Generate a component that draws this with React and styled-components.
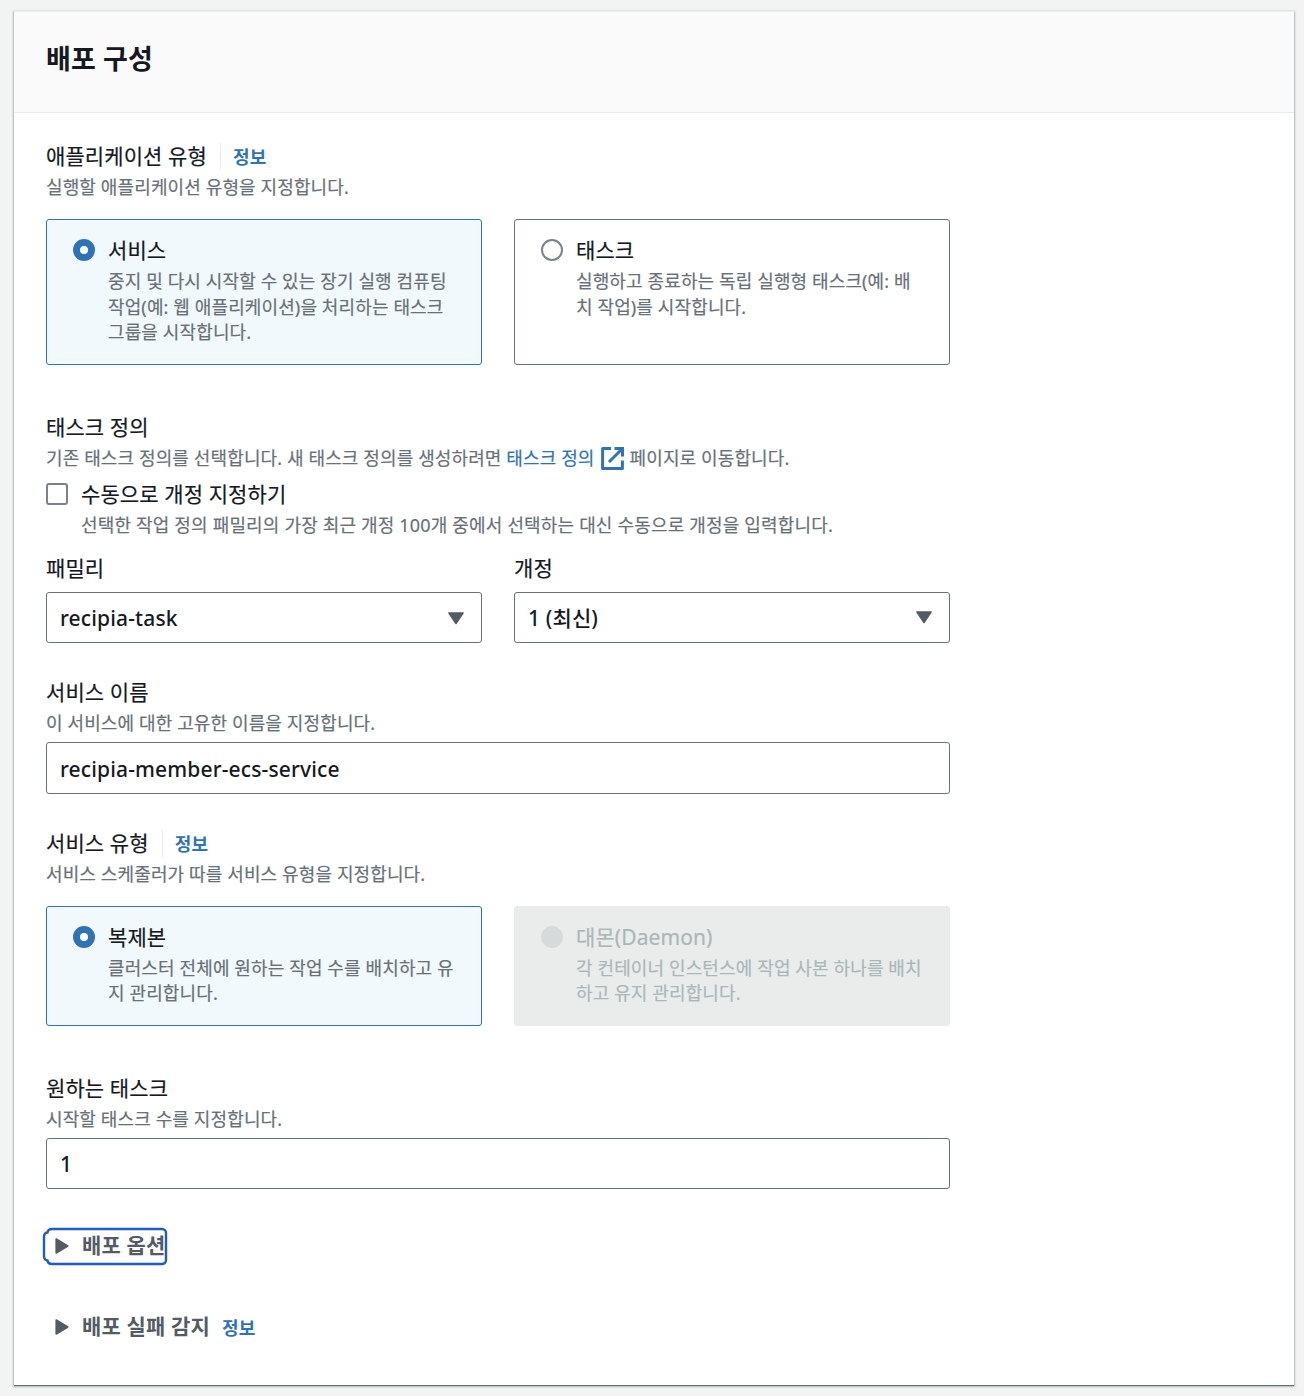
/**
 *
 * Deployment configuration
 *
 */

import React from 'react';

import styled, { createGlobalStyle } from 'styled-components';

const GlobalStyle = createGlobalStyle`
  body {
    margin: 0;
    background: #f2f3f3;
    color: #16191f;
    font-family: 'Noto Sans', 'Noto Sans CJK KR', sans-serif;
  }

  * {
    box-sizing: border-box;
  }
`;

const Page = styled.div`
  height: 1396px;
  padding: 11px 10px 11px 14px;
`;

const Panel = styled.section`
  height: 1374px;
  background: #fff;
  border-top: 1px solid #eaeded;
  box-shadow: 0 1px 1px 0 rgba(0, 28, 36, 0.5), 0 1px 2px 1px rgba(0, 28, 36, 0.2);
`;

const PanelHeader = styled.header`
  height: 101px;
  padding: 26px 32px 0;
  background: #fafafa;
  border-bottom: 1px solid #eaeded;
`;

const Title = styled.h2`
  margin: 0;
  font-size: 27px;
  font-weight: 700;
  letter-spacing: 0.1px;
  line-height: 42px;
`;

const PanelBody = styled.div`
  display: flex;
  flex-direction: column;
  width: 968px;
  padding: 26px 32px 0;
`;

const Field = styled.div`
  margin-bottom: ${({ $gap }) => $gap}px;
`;

const LabelRow = styled.div`
  display: flex;
  align-items: center;
  height: 35px;
  margin-bottom: 1px;
`;

const Label = styled.div`
  font-size: 21px;
  letter-spacing: 0.1px;
  line-height: 35px;
  white-space: nowrap;
  -webkit-text-stroke: 0.2px;
`;

const InfoLink = styled.a`
  color: #2e73b8;
  font-size: 18px;
  font-weight: 700;
  letter-spacing: 0.2px;
  line-height: 26px;
`;

const Divider = styled.span`
  height: 27px;
  margin: 0 12px 0 13px;
  border-left: 1px solid #eaeded;
`;

const Description = styled.div`
  color: #687078;
  font-size: 18px;
  letter-spacing: 0.12px;
  line-height: 25.33px;
  -webkit-text-stroke: 0.2px;
`;

const Columns = styled.div`
  display: grid;
  grid-template-columns: 1fr 1fr;
  gap: 32px;
  margin-top: ${({ $top }) => $top || 0}px;
`;

const tileColors = {
  selected: { border: '#2e73b8', background: '#f2f9fd' },
  idle: { border: '#687078', background: '#fff' },
  disabled: { border: '#eaecec', background: '#eaecec' },
};

const Tile = styled.div`
  display: flex;
  gap: 13px;
  height: ${({ $height }) => $height}px;
  padding: 13px 20px 0 26px;
  background: ${({ $state }) => tileColors[$state].background};
  border: 1px solid ${({ $state }) => tileColors[$state].border};
  border-radius: 3px;

  ${Label}, ${Description} {
    ${({ $state }) => ($state === 'disabled' ? 'color: #aab7b8;' : '')}
  }
`;

const TileText = styled.div`
  ${Label} {
    margin-bottom: 1px;
  }
`;

const radioStyles = {
  selected: 'border: 7px solid #2e73b8; background: #fff;',
  idle: 'border: 2px solid #7a8188; background: #fff;',
  disabled: 'background: #d5dbdb;',
};

const Radio = styled.span`
  flex: none;
  width: 22px;
  height: 22px;
  margin-top: 6px;
  border-radius: 50%;
  ${({ $state }) => radioStyles[$state]}
`;

const TaskLink = styled.a`
  color: #2e73b8;
`;

const ExternalIcon = styled.svg`
  width: 23px;
  height: 23px;
  margin: 0 6px;
  vertical-align: -5px;
`;

const CheckRow = styled.div`
  display: flex;
  gap: 13px;
  margin-top: 5px;

  ${Description} {
    margin: 1px 0 -1px;
    letter-spacing: 0.17px;
  }
`;

const Checkbox = styled.span`
  flex: none;
  width: 22px;
  height: 22px;
  margin-top: 6px;
  border: 2px solid #7a8188;
  border-radius: 3px;
`;

const Control = styled.div`
  display: flex;
  align-items: center;
  justify-content: space-between;
  height: ${({ $height }) => $height || 51}px;
  margin-top: ${({ $top }) => $top}px;
  padding: ${({ $shift }) => ($shift ? '2px' : '0')} 16px 0 13px;
  border: 1px solid #687078;
  border-radius: 3px;
  font-size: 21px;
  font-weight: 500;
  letter-spacing: 0.14px;
  white-space: pre;
`;

const Toggle = styled.div`
  display: flex;
  align-items: center;
  height: 35px;
  margin-bottom: 46px;
  padding-left: 9px;
  color: #545b64;
  font-size: 21px;
  font-weight: 700;
  letter-spacing: 0.15px;
  line-height: 33px;

  svg {
    margin-right: 13px;
  }

  ${InfoLink} {
    margin: 2px 0 0 12px;
  }
`;

const ToggleText = styled.span`
  margin-top: -2px;
`;

const FocusTarget = styled.div`
  position: relative;
  width: max-content;
`;

const FocusRing = styled.svg`
  position: absolute;
  top: -2px;
  left: -4px;
`;

function Caret() {
  return (
    <svg width="18" height="14" viewBox="0 0 18 14">
      <path d="M2 2h14L9 12.500z" fill="#545b64" stroke="#545b64" strokeWidth="1.6" strokeLinejoin="round" />
    </svg>
  );
}

function Arrow() {
  return (
    <svg width="14" height="18" viewBox="0 0 14 18">
      <path d="M1.2 2v14L12.8 9z" fill="#545b64" stroke="#545b64" strokeWidth="1.6" strokeLinejoin="round" />
    </svg>
  );
}

function External() {
  return (
    <ExternalIcon viewBox="0 0 23 23" fill="none" stroke="#2e73b8" strokeWidth="3">
      <path d="M10 1.6H1.6v19.8h19.8V13.5" strokeLinejoin="round" />
      <path d="M13.5 1.6h8v8M21 2L8 15" />
    </ExternalIcon>
  );
}

function Option({ state, height, title, lines }) {
  return (
    <Tile $state={state} $height={height}>
      <Radio $state={state} />
      <TileText>
        <Label>{title}</Label>
        {lines.map((line) => (
          <Description key={line}>{line}</Description>
        ))}
      </TileText>
    </Tile>
  );
}

function Heading({ children, info }) {
  return (
    <LabelRow>
      <Label>{children}</Label>
      {info && (
        <>
          <Divider />
          <InfoLink>정보</InfoLink>
        </>
      )}
    </LabelRow>
  );
}

function App() {
  return (
    <Page>
      <GlobalStyle />
      <Panel>
        <PanelHeader>
          <Title>배포 구성</Title>
        </PanelHeader>
        <PanelBody>
          <Field $gap={45}>
            <Heading info>애플리케이션 유형</Heading>
            <Description>실행할 애플리케이션 유형을 지정합니다.</Description>
            <Columns $top={19}>
              <Option
                state="selected"
                height={146}
                title="서비스"
                lines={[
                  '중지 및 다시 시작할 수 있는 장기 실행 컴퓨팅',
                  '작업(예: 웹 애플리케이션)을 처리하는 태스크',
                  '그룹을 시작합니다.',
                ]}
              />
              <Option
                state="idle"
                height={146}
                title="태스크"
                lines={['실행하고 종료하는 독립 실행형 태스크(예: 배', '치 작업)를 시작합니다.']}
              />
            </Columns>
          </Field>

          <Field $gap={32}>
            <Heading>태스크 정의</Heading>
            <Description>
              기존 태스크 정의를 선택합니다. 새 태스크 정의를 생성하려면 <TaskLink>태스크 정의</TaskLink>
              <External />
              페이지로 이동합니다.
            </Description>
            <CheckRow>
              <Checkbox />
              <div>
                <Label>수동으로 개정 지정하기</Label>
                <Description>
                  선택한 작업 정의 패밀리의 가장 최근 개정 100개 중에서 선택하는 대신 수동으로 개정을 입력합니다.
                </Description>
              </div>
            </CheckRow>
            <Columns $top={14}>
              <div>
                <Label>패밀리</Label>
                <Control $top={6} $shift>
                  recipia-task
                  <Caret />
                </Control>
              </div>
              <div>
                <Label>개정</Label>
                <Control $top={6}>
                  1 (최신)
                  <Caret />
                </Control>
              </div>
            </Columns>
          </Field>

          <Field $gap={32}>
            <Heading>서비스 이름</Heading>
            <Description>이 서비스에 대한 고유한 이름을 지정합니다.</Description>
            <Control $top={6} $height={52} $shift>recipia-member-ecs-service</Control>
          </Field>

          <Field $gap={45}>
            <Heading info>서비스 유형</Heading>
            <Description>서비스 스케줄러가 따를 서비스 유형을 지정합니다.</Description>
            <Columns $top={18}>
              <Option
                state="selected"
                height={120}
                title="복제본"
                lines={['클러스터 전체에 원하는 작업 수를 배치하고 유', '지 관리합니다.']}
              />
              <Option
                state="disabled"
                height={120}
                title="대몬(Daemon)"
                lines={['각 컨테이너 인스턴스에 작업 사본 하나를 배치', '하고 유지 관리합니다.']}
              />
            </Columns>
          </Field>

          <Field $gap={40}>
            <Heading>원하는 태스크</Heading>
            <Description>시작할 태스크 수를 지정합니다.</Description>
            <Control $top={6} $shift>1</Control>
          </Field>

          <FocusTarget>
            <Toggle>
              <Arrow />
              <ToggleText>배포 옵션</ToggleText>
            </Toggle>
            <FocusRing width="126" height="39" viewBox="0 0 126 39" fill="none">
              <path
                d="M10 2H120a4 4 0 0 1 4 4V33a4 4 0 0 1-4 4H10q-4 0-4.500-3.500q-3.500-.5-3.500-4.500V10q0-4 3.500-4.500Q6 2 10 2Z"
                stroke="#215bc2"
                strokeWidth="2.4"
              />
            </FocusRing>
          </FocusTarget>
          <Toggle>
            <Arrow />
            <ToggleText>배포 실패 감지</ToggleText>
            <InfoLink>정보</InfoLink>
          </Toggle>
        </PanelBody>
      </Panel>
    </Page>
  );
}

export default App;
